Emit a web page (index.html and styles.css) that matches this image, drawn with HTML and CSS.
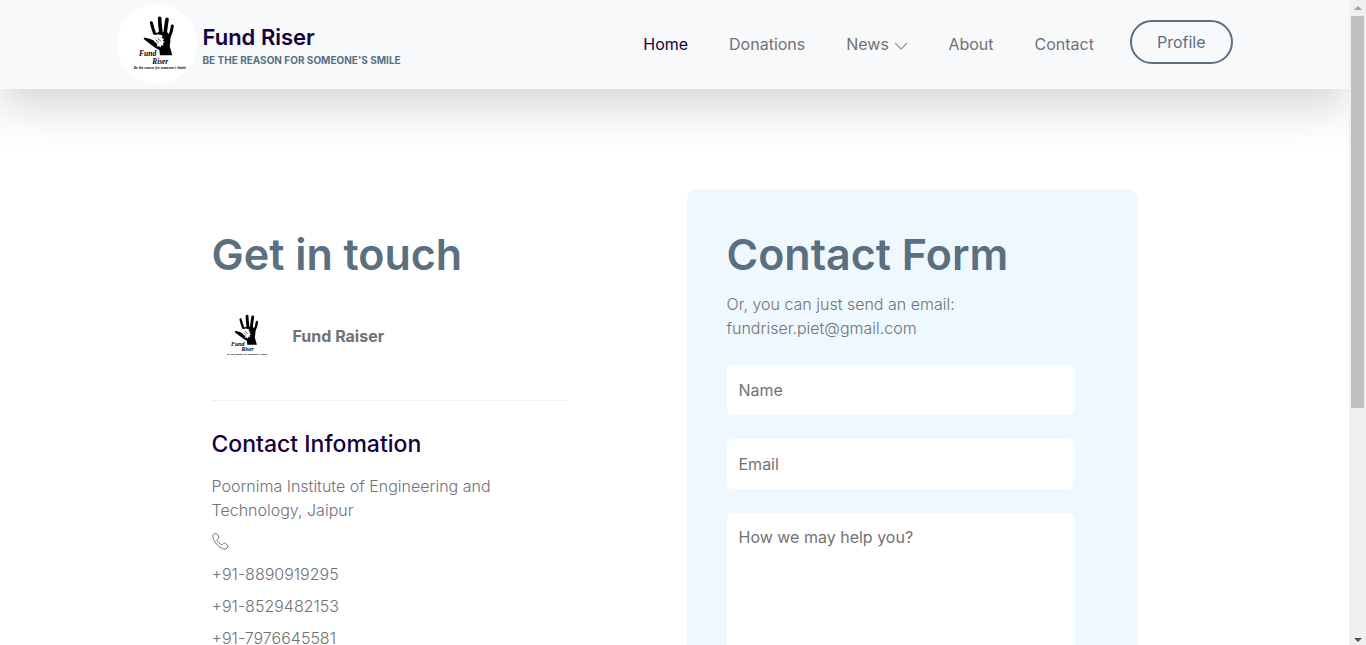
FILE: index.html
```html
<!DOCTYPE html>
<html lang="en">
<head>
<meta charset="utf-8">
<meta name="viewport" content="width=device-width, initial-scale=1">
<title>Fund Riser - Contact</title>
<link rel="stylesheet" href="styles.css">
</head>
<body>
<svg class="defs" aria-hidden="true">
  <symbol id="hand" viewBox="20 10 240 240">
    <g fill="none" stroke="#000" stroke-linecap="round" stroke-linejoin="round">
      <path stroke-width="9" d="M123 66l4 15 6 18"/>
      <path stroke-width="11" d="M148 53l1 20 3 26"/>
      <path stroke-width="11" d="M170 56l-3 20-3 24"/>
      <path stroke-width="9" d="M186 76l-3 16-7 18"/>
    </g>
    <path d="M128 94q8 6 18-1l12 2 12-1 10 12q1 18-2 30l8 28h-37l-2-16q-14-7-25-16l-19-15q-7-7 2-6 14 3 29 10z"/>
    <path fill="#fff" d="M127 101q10 3 16 0l12 3q4 5-2 7l7 3q3 3-3 5l5 4q2 4-4 3l1 7q-2 4-5-1l-3 7q-4 2-4-4l-5 3q-4-1-1-5l-10-12z"/>
    <path fill="none" stroke="#000" stroke-width="2" stroke-linecap="round" d="M137 118l8 7M142 113l9 8M137 126l5 5"/>
  </symbol>
</svg>
<div class="page">
  <header class="site-header">
    <div class="container header-row">
      <a class="brand" href="#">
        <svg class="brand-logo" viewBox="20 10 240 240" role="img" aria-label="Fund Riser logo">
          <use href="#hand" x="20" y="10" width="240" height="240"/>
          <text x="86" y="167" font-size="23">Fund</text>
          <text x="126" y="189" font-size="22">Riser</text>
          <text x="70" y="204" font-size="11">Be the reason for someone's Smile</text>
        </svg>
        <span class="brand-text">
          <span class="brand-name">Fund Riser</span>
          <span class="brand-tag">BE THE REASON FOR SOMEONE'S SMILE</span>
        </span>
      </a>
      <nav class="nav" aria-label="Main">
        <a class="active" href="#">Home</a>
        <a href="#">Donations</a>
        <a href="#">News
          <svg class="chevron" viewBox="0 0 12 8" aria-hidden="true"><path d="M0 1l6 6 6-6"/></svg>
        </a>
        <a href="#">About</a>
        <a href="#">Contact</a>
        <button class="profile" type="button">Profile</button>
      </nav>
    </div>
  </header>
  <main class="contact">
    <section class="info">
      <h2>Get in touch</h2>
      <div class="member">
        <svg class="member-logo" viewBox="20 10 240 240" role="img" aria-label="Fund Raiser logo">
          <use href="#hand" x="20" y="10" width="240" height="240"/>
          <text x="86" y="167" font-size="23">Fund</text>
          <text x="126" y="189" font-size="22">Riser</text>
          <text x="70" y="204" font-size="11">Be the reason for someone's Smile</text>
        </svg>
        <strong>Fund Raiser</strong>
      </div>
      <h3>Contact Infomation</h3>
      <p>Poornima Institute of Engineering and Technology, Jaipur</p>
      <svg class="phone" viewBox="0 0 51 51" role="img" aria-label="Phone"><path d="M3 9C1 2 12-1 16 4l4 8c2 4-5 6-5 10 1 5 9 12 14 13 4 1 5-6 9-5l8 6c4 3 1 9-4 12-8 2-20-5-29-16C6 24 2 16 3 9z"/></svg>
      <ul class="phones">
        <li><a href="tel:+918890919295">+91-8890919295</a></li>
        <li><a href="tel:+918529482153">+91-8529482153</a></li>
        <li><a href="tel:+917976645581">+91-7976645581</a></li>
      </ul>
    </section>
    <form class="card">
      <h2>Contact Form</h2>
      <p>Or, you can just send an email: <a href="mailto:fundriser.piet@gmail.com">fundriser.piet@gmail.com</a></p>
      <div class="fields">
        <input type="text" aria-label="Name" placeholder="Name">
        <input type="email" aria-label="Email" placeholder="Email">
        <textarea aria-label="How we may help you?" placeholder="How we may help you?"></textarea>
      </div>
    </form>
  </main>
</div>
<div class="scrollbar" aria-hidden="true">
  <svg viewBox="0 0 17 16"><path fill="#a3a3a3" d="M5 10l4-4 4 4z"/></svg>
  <div class="track"><div class="thumb"></div></div>
  <svg viewBox="0 0 17 16"><path fill="#505050" d="M5 9l4 4 4-4z"/></svg>
</div>
</body>
</html>
```
FILE: styles.css
```css
* { box-sizing: border-box; }

body {
  margin: 0;
  display: flex;
  height: 100vh;
  overflow: hidden;
  background: #fff;
  color: #717275;
  font-family: Inter, "Liberation Sans", sans-serif;
  font-size: 16px;
  font-weight: 300;
  line-height: 24px;
}

h2, h3, p, ul { margin: 0; }
a { color: inherit; text-decoration: none; }

.defs { position: absolute; width: 0; height: 0; }

.page { flex: 1; min-width: 0; overflow: hidden; }

.container {
  max-width: 1140px;
  margin: 0 auto;
  padding: 0 12px;
}

.site-header {
  background: #f8f9fb;
  box-shadow: 0 16px 48px rgba(0, 0, 0, 0.175);
}
.header-row {
  display: flex;
  align-items: center;
  justify-content: space-between;
  min-height: 89px;
  padding-bottom: 2px;
}

.brand { display: flex; align-items: center; gap: 6px; }
.brand-logo, .member-logo {
  font-family: "Liberation Serif", serif;
  font-style: italic;
  font-weight: 700;
}
.brand-logo {
  width: 80px;
  height: 80px;
  border-radius: 50%;
  background: #fff;
}
.brand-text { display: flex; flex-direction: column; padding-top: 6px; }
.brand-name { color: #14003c; font-size: 22px; font-weight: 600; line-height: 26px; }
.brand-tag { color: #5a6f80; font-size: 10px; font-weight: 700; line-height: 20px; }

.nav { display: flex; align-items: center; gap: 41px; font-weight: 400; }
.nav .active { color: #14003c; }
.chevron { width: 12px; height: 8px; margin-left: 2px; }
.chevron path { fill: none; stroke: #a08c78; stroke-width: 1.2; }
.profile {
  margin: 0 0 4px -5px;
  padding: 0 25px;
  height: 44px;
  border: 2px solid #5a6f80;
  border-radius: 22px;
  background: transparent;
  color: #5a6f80;
  font: inherit;
}

.contact {
  display: flex;
  justify-content: space-between;
  align-items: flex-start;
  max-width: 950px;
  margin: 0 auto;
  padding: 100px 12px;
}
.contact h2 {
  color: #5a6f80;
  font-size: 43px;
  font-weight: 600;
  line-height: 51px;
}

.info { width: 356px; padding-top: 40px; }
.member {
  display: flex;
  align-items: center;
  gap: 17px;
  padding: 25px 0 33px 2px;
  margin-bottom: 28px;
  border-bottom: 1px solid #f0f0f0;
}
.member-logo { width: 62px; height: 62px; }
.member strong { font-weight: 700; }
.info h3 {
  margin-bottom: 15px;
  color: #14003c;
  font-size: 23px;
  font-weight: 500;
  line-height: 30px;
}
.info p { max-width: 310px; }
.phone { display: block; width: 17px; height: 17px; margin: 11px 0 12px; }
.phone path { fill: none; stroke: #717275; stroke-width: 3; }
.phones { display: grid; gap: 8px; padding: 0; list-style: none; }

.card {
  width: 451px;
  padding: 40px;
  border-radius: 10px;
  background: #f0f8ff;
}
.card p { max-width: 260px; margin: 12px 0 25px; }
.fields { display: grid; gap: 24px; padding-right: 24px; }
.fields input, .fields textarea {
  width: 100%;
  height: 50px;
  padding: 12px;
  border: 0;
  border-radius: 6px;
  background: #fff;
  color: #717275;
  font: inherit;
  font-weight: 400;
}
.fields textarea { height: 250px; resize: none; }
.fields ::placeholder { color: #717275; opacity: 1; }

.scrollbar {
  display: flex;
  flex-direction: column;
  width: 17px;
  background: #f0f0f0;
}
.scrollbar svg { width: 17px; height: 16px; }
.track { flex: 1; padding: 0 2px; }
.thumb { height: 64%; background: #c1c1c1; }
```
